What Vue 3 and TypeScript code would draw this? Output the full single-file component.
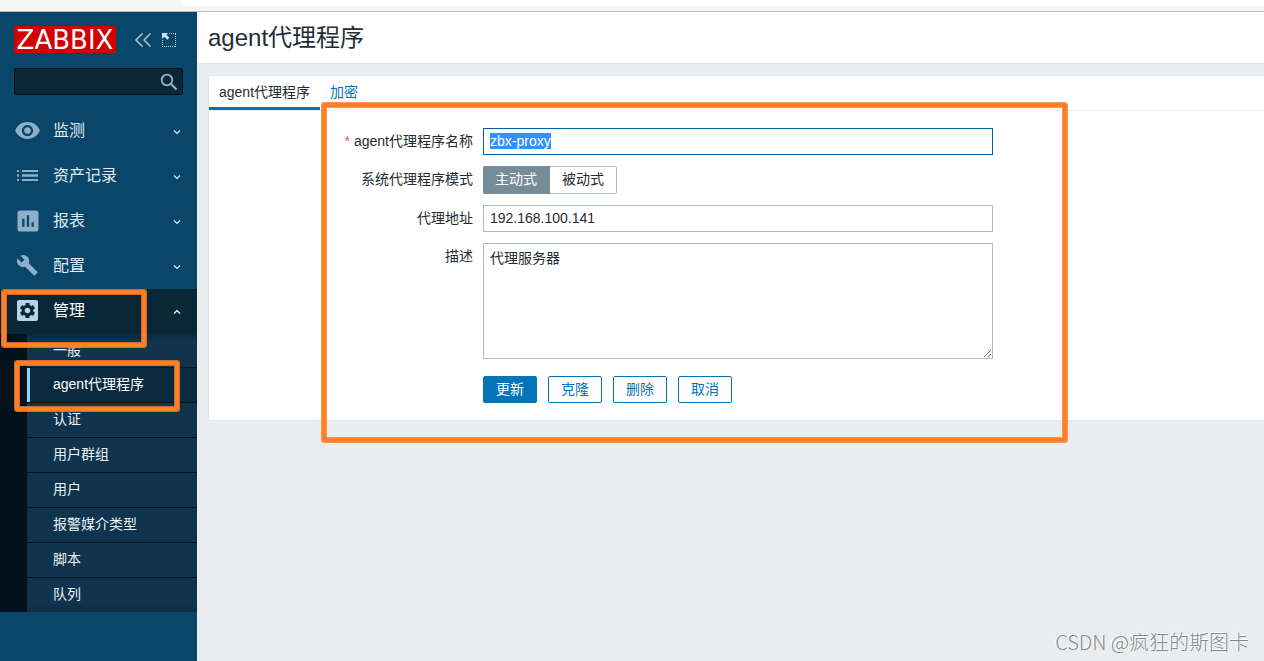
<script setup lang="ts">
import { onMounted, ref } from 'vue'

interface NavItem {
  label: string
  icon: string
  open?: boolean
}

const nav: NavItem[] = [
  { label: '监测', icon: 'eye' },
  { label: '资产记录', icon: 'list' },
  { label: '报表', icon: 'chart' },
  { label: '配置', icon: 'wrench' },
  { label: '管理', icon: 'gear', open: true },
]

const submenu: string[] = ['一般', 'agent代理程序', '认证', '用户群组', '用户', '报警媒介类型', '脚本', '队列']
const current = 'agent代理程序'

const name = ref('zbx-proxy')
const mode = ref('active')
const address = ref('192.168.100.141')
const description = ref('代理服务器')
const nameInput = ref<HTMLInputElement | null>(null)

onMounted(() => {
  nameInput.value?.focus()
  nameInput.value?.select()
})
</script>

<template>
  <div class="window">
    <div class="chrome"><div class="chrome-bar"></div></div>
    <div class="layout">
      <aside class="sidebar">
        <div class="brand">
          <a href="#" class="logo">ZABBIX</a>
          <button type="button" class="icon-btn collapse" aria-label="收起">
            <svg width="18" height="16" viewBox="0 0 18 16" fill="none" stroke="#a9c6d8" stroke-width="1.6">
              <path d="M8.500 1.500L2 8l6.500 6.500M16.500 1.500L10 8l6.500 6.500" />
            </svg>
          </button>
          <button type="button" class="icon-btn" aria-label="隐藏">
            <svg width="16" height="16" viewBox="0 0 16 16">
              <path d="M1 1h6L5.400 2.800l3 3-2 2-3-3L1 7z" fill="#d0e2ec" />
              <path d="M8 1.500h7M14.500 2v13M1 14.500h13M1.500 8v6" fill="none" stroke="#b4cedd" stroke-dasharray="1 1" />
            </svg>
          </button>
        </div>
        <form class="search" role="search" @submit.prevent>
          <input type="text" aria-label="搜索" />
          <button type="submit" aria-label="搜索">
            <svg width="18" height="18" viewBox="0 0 18 18" fill="none" stroke="#8fb3ca">
              <circle cx="7" cy="7" r="5.300" stroke-width="1.800" />
              <path d="M10.800 10.800L16.500 16.500" stroke-width="2.200" />
            </svg>
          </button>
        </form>

        <nav>
          <ul class="nav">
            <li v-for="item in nav" :key="item.label">
              <a href="#" class="nav-link" :class="{ open: item.open }">
                <span class="nav-icon">
                  <svg v-if="item.icon === 'eye'" width="27" height="27" viewBox="0 0 24 24">
                    <path d="M12 4.500C7 4.500 2.730 7.610 1 12c1.730 4.390 6 7.500 11 7.500s9.270-3.110 11-7.500c-1.730-4.390-6-7.500-11-7.500zM12 17c-2.760 0-5-2.240-5-5s2.240-5 5-5 5 2.240 5 5-2.240 5-5 5zm0-8c-1.660 0-3 1.340-3 3s1.340 3 3 3 3-1.340 3-3-1.340-3-3-3z" />
                  </svg>
                  <svg v-else-if="item.icon === 'list'" width="21" height="21" viewBox="0 0 21 21">
                    <path d="M0 5h2v2H0zM5 5h16v2H5zM0 9.300h2v2.400H0zM5 9.300h16v2.400H5zM0 14h2v2H0zM5 14h16v2H5z" />
                  </svg>
                  <svg v-else-if="item.icon === 'chart'" width="28" height="28" viewBox="0 0 24 24">
                    <path d="M19 3H5c-1.100 0-2 .9-2 2v14c0 1.100.9 2 2 2h14c1.100 0 2-.9 2-2V5c0-1.100-.9-2-2-2zM9 17H7v-7h2v7zm4 0h-2V7h2v10zm4 0h-2v-4h2v4z" />
                  </svg>
                  <svg v-else-if="item.icon === 'wrench'" width="21" height="21" viewBox="1 1 22.500 22.500">
                    <path d="M22.700 19l-9.100-9.100c.9-2.300.4-5-1.500-6.900-2-2-5-2.400-7.400-1.300L9 6 6 9 1.600 4.700C.4 7.100.9 10.100 2.900 12.100c1.900 1.900 4.600 2.400 6.900 1.500l9.100 9.100c.4.4 1 .4 1.400 0l2.300-2.300c.5-.4.5-1.100.1-1.400z" />
                  </svg>
                  <svg v-else width="21" height="21" viewBox="0 0 21 21">
                    <rect width="21" height="21" rx="2" />
                    <path class="cog" transform="translate(1.020 1.020) scale(.79)" d="M19.140 12.940c.04-.3.06-.61.06-.94 0-.32-.02-.64-.07-.94l2.030-1.580c.18-.14.23-.41.12-.61l-1.920-3.320c-.12-.22-.37-.29-.59-.22l-2.390.96c-.5-.38-1.030-.7-1.620-.94l-.36-2.540c-.04-.24-.24-.41-.48-.41h-3.840c-.24 0-.43.17-.47.41l-.36 2.540c-.59.24-1.130.57-1.620.94l-2.390-.96c-.22-.08-.47 0-.59.22L2.740 8.870c-.12.21-.08.47.12.61l2.030 1.580c-.05.3-.09.63-.09.94s.02.64.07.94l-2.030 1.580c-.18.14-.23.41-.12.61l1.920 3.320c.12.22.37.29.59.22l2.390-.96c.5.38 1.030.7 1.620.94l.36 2.540c.05.24.24.41.48.41h3.840c.24 0 .44-.17.47-.41l.36-2.540c.59-.24 1.130-.56 1.620-.94l2.390.96c.22.08.47 0 .59-.22l1.920-3.320c.12-.22.07-.47-.12-.61l-2.010-1.580zM12 15.600c-1.980 0-3.600-1.620-3.600-3.600s1.620-3.600 3.600-3.600 3.600 1.620 3.600 3.600-1.620 3.600-3.600 3.600z" />
                  </svg>
                </span>
                <span class="nav-label">{{ item.label }}</span>
                <svg class="chevron" width="8" height="6" viewBox="0 0 8 6" fill="none" stroke="currentColor" stroke-width="1.2">
                  <path :d="item.open ? 'M1 4.500L4 1.500l3 3' : 'M1 1.500l3 3 3-3'" />
                </svg>
              </a>
              <ul v-if="item.open" class="submenu">
                <li v-for="entry in submenu" :key="entry">
                  <a href="#" :class="{ current: entry === current }">{{ entry }}</a>
                </li>
              </ul>
            </li>
          </ul>
        </nav>
        <div class="mark mark-menu"></div>
        <div class="mark mark-entry"></div>
      </aside>

      <main class="main">
        <header class="title"><h1>agent代理程序</h1></header>
        <section class="panel">
          <div class="tabs">
            <a href="#" class="tab active">agent代理程序</a>
            <a href="#" class="tab">加密</a>
          </div>
          <form class="form" @submit.prevent>
            <label for="name"><span class="required">*</span> agent代理程序名称</label>
            <input id="name" ref="nameInput" v-model="name" type="text" class="field" />

            <span id="mode-label" class="label">系统代理程序模式</span>
            <div class="segment" role="radiogroup" aria-labelledby="mode-label">
              <label><input v-model="mode" type="radio" name="mode" value="active" /><span>主动式</span></label>
              <label><input v-model="mode" type="radio" name="mode" value="passive" /><span>被动式</span></label>
            </div>

            <label for="address">代理地址</label>
            <input id="address" v-model="address" type="text" class="field" />

            <label for="description">描述</label>
            <textarea id="description" v-model="description" class="field area"></textarea>

            <div class="actions">
              <button type="submit" class="btn primary">更新</button>
              <button type="button" class="btn">克隆</button>
              <button type="button" class="btn">删除</button>
              <button type="button" class="btn">取消</button>
            </div>
          </form>
        </section>
        <div class="mark mark-form"></div>
        <div class="watermark">CSDN @疯狂的斯图卡</div>
      </main>
    </div>
  </div>
</template>

<style>
body {
  margin: 0;
  background: #e9edf0;
}
</style>

<style scoped>
* {
  box-sizing: border-box;
}
.window {
  display: flex;
  flex-direction: column;
  min-height: 100vh;
  font: 14px/20px "Liberation Sans", "Noto Sans CJK SC", sans-serif;
  color: #1f2c33;
}
a {
  text-decoration: none;
}
ul {
  list-style: none;
  margin: 0;
  padding: 0;
}
button,
input,
textarea {
  font-family: inherit;
  font-size: inherit;
  margin: 0;
}
.chrome {
  height: 12px;
  padding-left: 180px;
  background: #f5f5f5;
  border-bottom: 1px solid #b9bcbe;
}
.chrome-bar {
  height: 6px;
  background: #fff;
  border-radius: 0 0 0 6px;
}
.layout {
  display: flex;
  flex: 1;
}
.sidebar {
  position: relative;
  flex: none;
  width: 197px;
  background: #0a466a;
}
.brand {
  display: flex;
  align-items: center;
  padding: 14px 14px 0;
}
.logo {
  width: 102px;
  height: 27px;
  background: #d40000;
  color: #fff;
  font: 26px/29px "DejaVu Sans", sans-serif;
  text-align: center;
}
.icon-btn {
  display: flex;
  padding: 0;
  margin-left: 9px;
  border: 0;
  background: none;
}
.collapse {
  margin-left: 18px;
}
.search {
  display: flex;
  align-items: center;
  height: 27px;
  margin: 15px 14px 14px;
  background: #0a2738;
  border: 1px solid #04121b;
  border-radius: 2px;
}
.search input {
  flex: 1;
  min-width: 0;
  padding: 0 6px;
  border: 0;
  outline: 0;
  background: none;
  color: #fff;
}
.search button {
  display: flex;
  padding: 0 4px;
  border: 0;
  background: none;
}
.nav-link {
  display: flex;
  align-items: center;
  height: 45px;
  padding: 0 16px 2px 0;
  color: #dfe9ef;
  font-size: 16px;
}
.nav-icon {
  display: flex;
  justify-content: center;
  width: 55px;
  fill: #8cb0c8;
}
.nav-label {
  flex: 1;
  margin-left: -2px;
}
.chevron {
  margin-top: 3px;
}
.open {
  background: #0a2738;
  color: #fff;
}
.open .nav-icon {
  fill: #b5d3e6;
}
.cog {
  fill: #0a2738;
}
.submenu {
  border-left: 27px solid #04131b;
  background: #10344e;
}
.submenu a {
  display: block;
  height: 34px;
  padding-left: 26px;
  color: #eaf1f5;
  line-height: 33px;
}
.submenu li:first-child a {
  height: 33px;
  background: linear-gradient(#0b2a3e, #10344e 8px);
}
.submenu li:last-child a {
  background: linear-gradient(#10344e 26px, #0d2d43);
}
.submenu li + li {
  border-top: 1px solid #05161f;
}
.submenu a.current {
  padding-left: 23px;
  border-left: 3px solid #8ad4ff;
  background: #0a2b3e;
  color: #fff;
}
.main {
  position: relative;
  flex: 1;
  min-width: 0;
}
.title {
  padding: 8px 11px;
  background: #fff;
  border-bottom: 1px solid #dfe4e7;
}
.title h1 {
  margin: 0;
  font-size: 24px;
  line-height: 35px;
  font-weight: 400;
}
.panel {
  margin: 11px 0 0 11px;
  background: #fff;
  border: 1px solid #dfe4e7;
  border-right: 0;
}
.tabs {
  display: flex;
  border-bottom: 1px solid #ebeef0;
}
.tab {
  height: 34px;
  padding: 0 10px;
  color: #0275b8;
  line-height: 32px;
}
.tab.active {
  color: #1f2c33;
  border-bottom: 3px solid #0275b8;
}
.form {
  display: grid;
  grid-template-columns: 264px minmax(0, 510px);
  gap: 11px 10px;
  padding: 17px 0;
}
.form > label,
.form > .label {
  text-align: right;
  line-height: 27px;
}
.required {
  color: #e45959;
}
.field {
  display: block;
  width: 100%;
  height: 27px;
  padding: 0 6px 1px;
  border: 1px solid #acbbc2;
  border-radius: 0;
  background: #fff;
  color: #1f2c33;
  outline: 0;
}
.field:focus {
  border-color: #00629b;
}
.field::selection {
  background: rgba(51, 144, 255, 0.996);
  color: #fff;
}
.area {
  height: 116px;
  padding: 4px 6px;
  line-height: 20px;
  resize: both;
}
.segment {
  display: flex;
  height: 28px;
}
.segment input {
  position: absolute;
  opacity: 0;
}
.segment span {
  display: block;
  width: 67px;
  height: 28px;
  border: 1px solid #acbbc2;
  border-left: 0;
  border-radius: 0 2px 2px 0;
  line-height: 25px;
  text-align: center;
}
.segment input:checked + span {
  border-color: #768d99;
  border-radius: 2px 0 0 2px;
  background: #768d99;
  color: #fff;
}
.actions {
  display: flex;
  grid-column: 2;
  gap: 11px;
  margin-top: 6px;
}
.btn {
  width: 54px;
  height: 27px;
  padding: 0;
  border: 1px solid #0275b8;
  border-radius: 2px;
  background: #fff;
  color: #0275b8;
  line-height: 25px;
}
.btn.primary {
  background: #0275b8;
  color: #fff;
}
.mark {
  position: absolute;
  border: 4px solid #ff7f27;
  border-radius: 2px;
  box-shadow: 0 0 0 1px rgba(255, 127, 39, 0.8), inset 0 0 0 1px rgba(255, 127, 39, 0.8);
  pointer-events: none;
}
.mark-menu {
  top: 278px;
  left: 2px;
  width: 144px;
  height: 57px;
}
.mark-entry {
  top: 349px;
  left: 15px;
  width: 164px;
  height: 50px;
}
.mark-form {
  top: 91px;
  left: 125px;
  width: 745px;
  height: 339px;
}
.watermark {
  position: absolute;
  right: 15px;
  bottom: 4px;
  color: #85898c;
  font: 20px/30px "Noto Sans CJK SC", sans-serif;
  font-weight: 300;
  text-shadow: -1px -1px 0 #fff;
}
</style>
